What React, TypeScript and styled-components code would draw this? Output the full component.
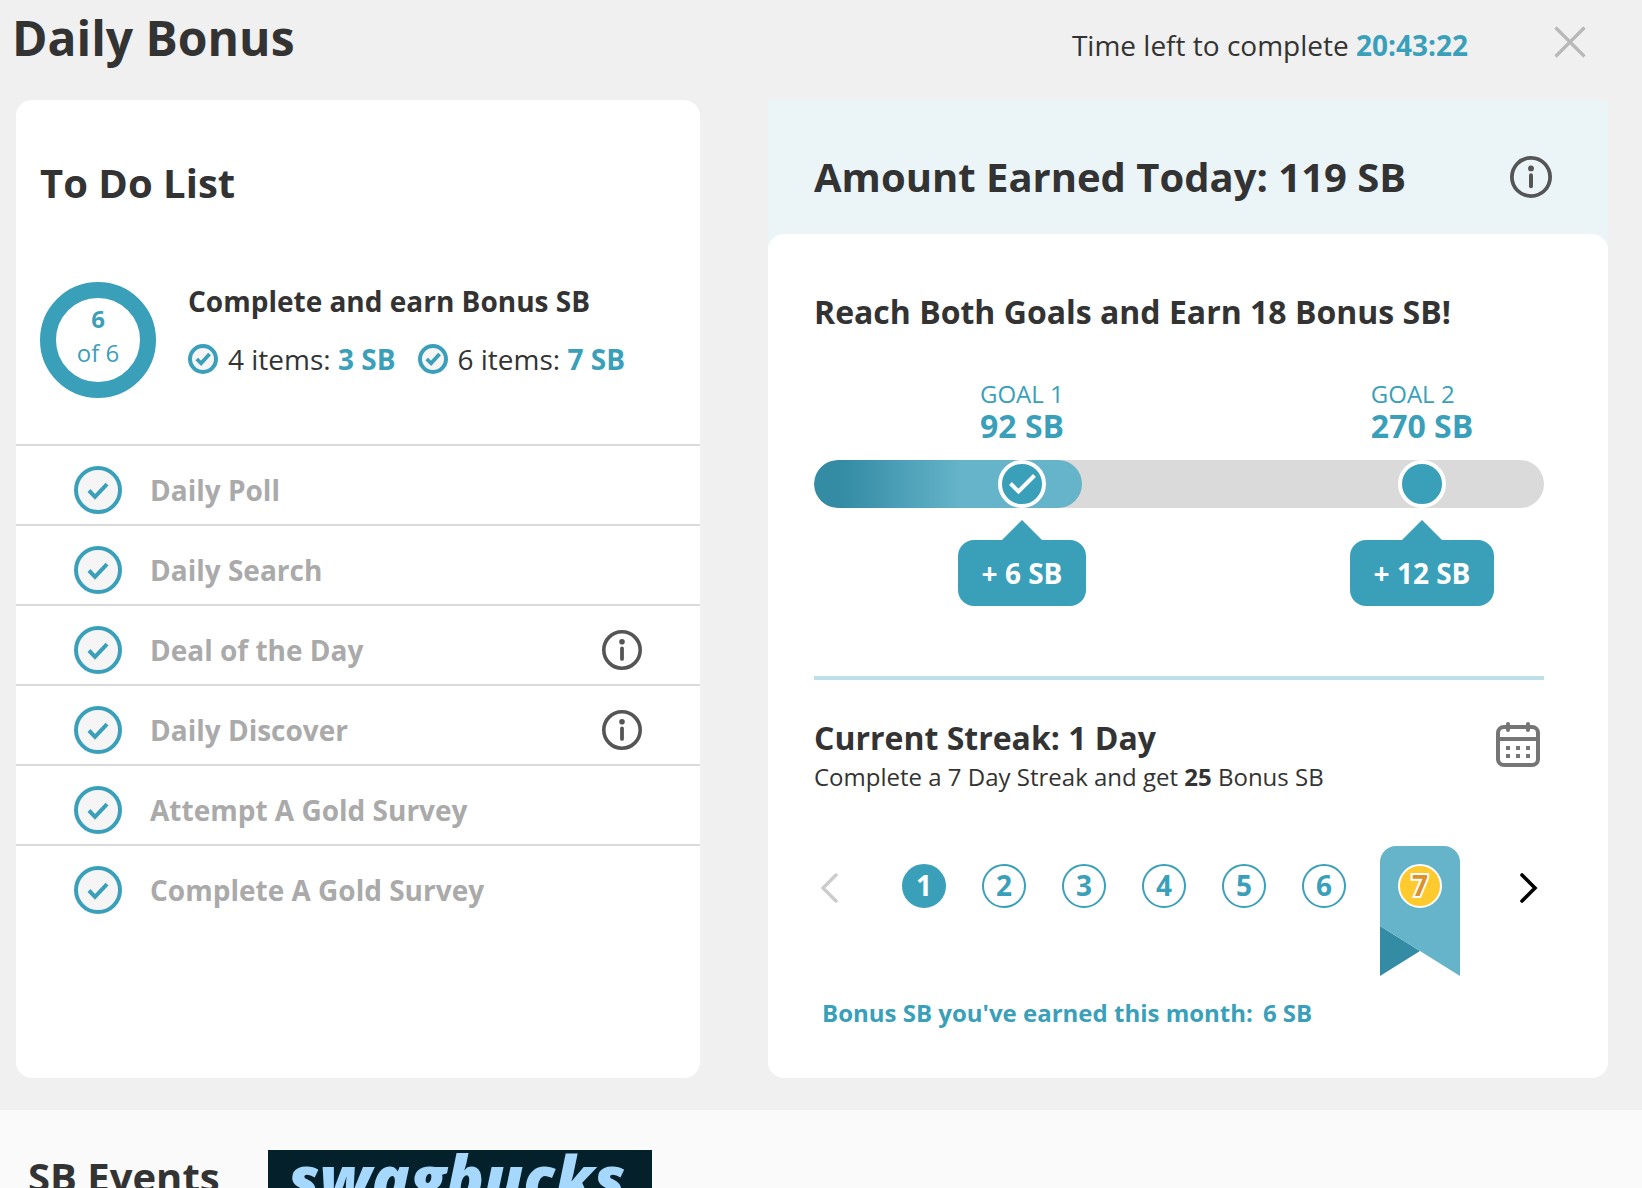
import React from "react";
import styled, { createGlobalStyle } from "styled-components";

const color = {
  text: "#333333",
  teal: "#3aa0ba",
  tealLight: "#65b4c9",
  tealDark: "#338ba4",
  muted: "#aaaaaa",
  line: "#dadada",
};

const GlobalStyle = createGlobalStyle`
  *, *::before, *::after { box-sizing: border-box; }
  body {
    margin: 0;
    background: #fafafa;
    color: ${color.text};
    font-family: "Open Sans", "Noto Sans", sans-serif;
  }
  h1, h2, h3, p, ul, ol { margin: 0; padding: 0; }
  ul, ol { list-style: none; }
  svg { display: block; }
`;

const Page = styled.div`
  display: flex;
  flex-direction: column;
  height: 100vh;
  overflow: hidden;
`;

const BonusSection = styled.section`
  flex: none;
  padding-bottom: 32px;
  background: #f0f0f0;
`;

const Header = styled.header`
  display: flex;
  align-items: baseline;
  padding: 6px 36px 22px 12px;
`;

const Title = styled.h1`
  flex: 1;
  font-size: 48px;
  line-height: 64px;
`;

const TimeLeft = styled.p`
  font-size: 28px;
  line-height: 40px;
`;

const Accent = styled.strong`
  color: ${color.teal};
`;

const IconButton = styled.button<{ $width: number; $height: number }>`
  display: flex;
  flex: none;
  align-items: center;
  justify-content: center;
  width: ${(p) => p.$width}px;
  height: ${(p) => p.$height}px;
  padding: 0;
  border: 0;
  background: none;
  cursor: pointer;

  &:disabled {
    cursor: default;
  }
`;

const CloseButton = styled(IconButton)`
  align-self: flex-start;
  margin-left: 66px;
`;

const Columns = styled.div`
  display: grid;
  grid-template-columns: 684fr 840fr;
  column-gap: 68px;
  padding: 0 34px 0 16px;
`;

const TodoCard = styled.section`
  padding-top: 56px;
  border-radius: 16px;
  background: #ffffff;
`;

const SectionTitle = styled.h2`
  font-size: 40px;
  line-height: 54px;
`;

const TodoTitle = styled(SectionTitle)`
  padding-left: 24px;
`;

const Summary = styled.div`
  display: flex;
  gap: 32px;
  padding: 72px 24px 46px;
`;

const Ring = styled.div`
  display: flex;
  flex: none;
  flex-direction: column;
  align-items: center;
  width: 116px;
  height: 116px;
  padding-top: 4px;
  border: 16px solid ${color.teal};
  border-radius: 50%;
  color: ${color.teal};
  font-size: 24px;
  line-height: 34px;
`;

const SummaryText = styled.div`
  display: flex;
  flex-direction: column;
  gap: 19px;
  font-size: 28px;
  line-height: 40px;
`;

const SummaryHeading = styled.h3`
  font-size: 28px;
  line-height: 38px;
`;

const Tiers = styled.ul`
  display: flex;
  gap: 22px;
`;

const Tier = styled.li`
  display: flex;
  gap: 10px;
  align-items: center;
  white-space: nowrap;
`;

const TodoRow = styled.li`
  display: flex;
  align-items: center;
  gap: 28px;
  height: 80px;
  padding: 10px 58px 0;
  border-top: 2px solid ${color.line};
  color: ${color.muted};
  font-size: 28px;
  font-weight: 700;
  line-height: 40px;
`;

const TodoName = styled.span`
  flex: 1;
`;

const EarnCard = styled.section`
  border-radius: 0 0 16px 16px;
  background: #ebf5f8;
`;

const EarnHeader = styled.div`
  display: flex;
  align-items: center;
  justify-content: space-between;
  height: 134px;
  padding: 20px 56px 0 46px;
`;

const EarnBody = styled.div`
  padding: 56px 64px 48px 46px;
  border-radius: 16px;
  background: #ffffff;
`;

const Subtitle = styled.h3`
  font-size: 32px;
  line-height: 44px;
`;

const GoalGrid = styled.div`
  display: grid;
  grid-template-columns: 416fr 70fr 244fr;
  grid-template-rows: auto 48px auto;
  justify-items: center;
  margin-top: 46px;
`;

const GoalLabel = styled.div<{ $column: number }>`
  grid-row: 1;
  grid-column: ${(p) => p.$column};
  margin-bottom: 16px;
  color: ${color.teal};
`;

const GoalName = styled.p`
  font-size: 24px;
  line-height: 28px;
`;

const GoalAmount = styled.p`
  font-size: 32px;
  font-weight: 700;
  line-height: 36px;
`;

const Track = styled.div`
  grid-row: 2;
  grid-column: 1 / -1;
  justify-self: stretch;
  overflow: hidden;
  border-radius: 24px;
  background: ${color.line};
`;

const TrackFill = styled.div`
  height: 100%;
  border-radius: 24px;
  background: linear-gradient(90deg, ${color.tealDark} 10%, ${color.tealLight} 55%);
`;

const GoalMarker = styled.div<{ $column: number }>`
  z-index: 1;
  grid-row: 2;
  grid-column: ${(p) => p.$column};
  width: 48px;
  height: 48px;
  border: 4px solid #ffffff;
  border-radius: 50%;
  background: ${color.teal};
`;

const Callout = styled.div<{ $column: number }>`
  display: flex;
  flex-direction: column;
  align-items: center;
  grid-row: 3;
  grid-column: ${(p) => p.$column};
  margin-top: 12px;

  &::before {
    content: "";
    border: 20px solid transparent;
    border-top-width: 0;
    border-bottom-color: ${color.teal};
  }
`;

const CalloutText = styled.p`
  padding: 14px 24px;
  border-radius: 16px;
  background: ${color.teal};
  color: #ffffff;
  font-size: 28px;
  font-weight: 700;
  line-height: 38px;
`;

const Divider = styled.hr`
  height: 4px;
  margin: 70px 0 36px;
  border: 0;
  background: #bde0e8;
`;

const StreakHeader = styled.div`
  display: flex;
  align-items: flex-start;
  justify-content: space-between;
`;

const StreakNote = styled.p`
  font-size: 24px;
  line-height: 34px;
`;

const StreakRow = styled.div`
  display: flex;
  align-items: flex-start;
  margin-top: 52px;
`;

const NavButton = styled(IconButton)`
  margin-top: 18px;

  &:last-child {
    margin-left: auto;
  }
`;

const Days = styled.ol`
  display: flex;
  margin-left: 40px;
`;

const Day = styled.li`
  width: 80px;
  padding: 18px 18px 0;
`;

const RibbonDay = styled.li`
  display: grid;
  justify-items: center;
  width: 80px;
  height: 130px;
  margin-left: 16px;

  & > * {
    grid-area: 1 / 1;
  }
`;

const DayBadge = styled.span<{ $filled?: boolean }>`
  display: block;
  width: 44px;
  height: 44px;
  border: 2px solid ${color.teal};
  border-radius: 50%;
  background: ${(p) => (p.$filled ? color.teal : "#ffffff")};
  color: ${(p) => (p.$filled ? "#ffffff" : color.teal)};
  font-size: 28px;
  font-weight: 700;
  line-height: 38px;
  text-align: center;
`;

const PrizeBadge = styled(DayBadge)`
  margin-top: 18px;
  border-color: #ffffff;
  background: #ffca2e;
  color: #dc912d;
  -webkit-text-stroke: 4px #ffffff;
  paint-order: stroke fill;
`;

const MonthTotal = styled.p`
  display: flex;
  gap: 10px;
  margin-top: 20px;
  padding-left: 8px;
  color: ${color.teal};
  font-size: 24px;
  font-weight: 700;
  line-height: 34px;
`;

const Events = styled.section`
  display: flex;
  align-items: flex-start;
  padding: 40px 28px;
`;

const EventsTitle = styled(SectionTitle)`
  flex: none;
  width: 240px;
`;

const Banner = styled.a`
  flex: none;
  width: 384px;
  height: 160px;
  padding: 0 20px;
  background: #03202b;
  color: #a6d8fd;
  font-size: 63px;
  font-style: italic;
  font-weight: 800;
  line-height: 56px;
  text-decoration: none;
`;

function CheckIcon({ size, ring }: { size: number; ring: number }) {
  return (
    <svg width={size} height={size} viewBox="0 0 48 48" fill="none" aria-hidden="true">
      <circle cx="24" cy="24" r={24 - ring / 2} fill="#f5f5f5" stroke={color.teal} strokeWidth={ring} />
      <path
        d={ring > 4 ? "M14 24 21 31 34.5 16" : "M15 24.5 21 30.8 33 18.2"}
        stroke={color.teal}
        strokeWidth={ring > 4 ? 6 : 4}
      />
    </svg>
  );
}

function InfoIcon({ size }: { size: number }) {
  return (
    <svg width={size} height={size} viewBox="0 0 40 40" fill="none" aria-hidden="true">
      <circle cx="20" cy="20" r="18.2" stroke="#555555" strokeWidth="3.6" />
      <circle cx="20" cy="11.8" r="2.8" fill="#555555" />
      <path d="M20 18.3v10.6" stroke="#555555" strokeWidth="3.8" strokeLinecap="round" />
    </svg>
  );
}

function CalendarIcon() {
  return (
    <svg width="44" height="45" viewBox="0 0 44 45" fill="none" stroke="#757575" aria-hidden="true">
      <rect x="2" y="5" width="40" height="38" rx="6" strokeWidth="4" />
      <path d="M2 17h40" strokeWidth="4" />
      <path d="M12 2v6M32 2v6" strokeWidth="4" strokeLinecap="round" />
      <path d="M10 26h4m6 0h4m6 0h4M10 34h4m6 0h4m6 0h4" strokeWidth="4" />
    </svg>
  );
}

const todos = [
  { name: "Daily Poll" },
  { name: "Daily Search" },
  { name: "Deal of the Day", info: true },
  { name: "Daily Discover", info: true },
  { name: "Attempt A Gold Survey" },
  { name: "Complete A Gold Survey" },
];

const tiers = [
  { label: "4 items:", reward: "3 SB" },
  { label: "6 items:", reward: "7 SB" },
];

const goals = [
  { name: "GOAL 1", amount: "92 SB", bonus: "+ 6 SB", column: 1, reached: true },
  { name: "GOAL 2", amount: "270 SB", bonus: "+ 12 SB", column: 3, reached: false },
];

const earned = 119;
const trackMax = 324;

export default function App() {
  return (
    <Page>
      <GlobalStyle />
      <BonusSection>
        <Header>
          <Title>Daily Bonus</Title>
          <TimeLeft>
            Time left to complete <Accent>20:43:22</Accent>
          </TimeLeft>
          <CloseButton type="button" $width={72} $height={72} aria-label="Close">
            <svg width="32" height="32" viewBox="0 0 32 32" stroke="#b8b8b8" strokeWidth="3.2">
              <path d="M1.5 1.5l29 29M30.5 1.5l-29 29" />
            </svg>
          </CloseButton>
        </Header>

        <Columns>
          <TodoCard>
            <TodoTitle>To Do List</TodoTitle>
            <Summary>
              <Ring>
                <strong>6</strong>
                <span>of 6</span>
              </Ring>
              <SummaryText>
                <SummaryHeading>Complete and earn Bonus SB</SummaryHeading>
                <Tiers>
                  {tiers.map((tier) => (
                    <Tier key={tier.label}>
                      <CheckIcon size={30} ring={6.4} />
                      <span>
                        {tier.label} <Accent>{tier.reward}</Accent>
                      </span>
                    </Tier>
                  ))}
                </Tiers>
              </SummaryText>
            </Summary>
            <ul>
              {todos.map((todo) => (
                <TodoRow key={todo.name}>
                  <CheckIcon size={48} ring={4} />
                  <TodoName>{todo.name}</TodoName>
                  {todo.info && (
                    <IconButton type="button" $width={40} $height={40} aria-label={`About ${todo.name}`}>
                      <InfoIcon size={40} />
                    </IconButton>
                  )}
                </TodoRow>
              ))}
            </ul>
          </TodoCard>

          <EarnCard>
            <EarnHeader>
              <SectionTitle>Amount Earned Today: {earned} SB</SectionTitle>
              <IconButton type="button" $width={42} $height={42} aria-label="About earnings">
                <InfoIcon size={42} />
              </IconButton>
            </EarnHeader>
            <EarnBody>
              <Subtitle>Reach Both Goals and Earn 18 Bonus SB!</Subtitle>
              <GoalGrid>
                <Track>
                  <TrackFill style={{ width: `${(earned / trackMax) * 100}%` }} />
                </Track>
                {goals.map((goal) => (
                  <React.Fragment key={goal.name}>
                    <GoalLabel $column={goal.column}>
                      <GoalName>{goal.name}</GoalName>
                      <GoalAmount>{goal.amount}</GoalAmount>
                    </GoalLabel>
                    <GoalMarker $column={goal.column}>
                      {goal.reached && (
                        <svg width="40" height="40" viewBox="0 0 40 40" fill="none" aria-hidden="true">
                          <path d="M8.5 19.5 16.5 27.5 32.5 11.5" stroke="#ffffff" strokeWidth="4" />
                        </svg>
                      )}
                    </GoalMarker>
                    <Callout $column={goal.column}>
                      <CalloutText>{goal.bonus}</CalloutText>
                    </Callout>
                  </React.Fragment>
                ))}
              </GoalGrid>

              <Divider />

              <StreakHeader>
                <div>
                  <Subtitle>Current Streak: 1 Day</Subtitle>
                  <StreakNote>
                    Complete a 7 Day Streak and get <strong>25</strong> Bonus SB
                  </StreakNote>
                </div>
                <IconButton type="button" $width={52} $height={56} aria-label="Streak calendar">
                  <CalendarIcon />
                </IconButton>
              </StreakHeader>

              <StreakRow>
                <NavButton type="button" $width={30} $height={48} aria-label="Previous days" disabled>
                  <svg width="18" height="30" viewBox="0 0 18 30" fill="none">
                    <path d="M16 2 3 15 16 28" stroke="#cccccc" strokeWidth="3.4" strokeLinecap="round" />
                  </svg>
                </NavButton>
                <Days>
                  {[1, 2, 3, 4, 5, 6].map((day) => (
                    <Day key={day}>
                      <DayBadge $filled={day === 1}>{day}</DayBadge>
                    </Day>
                  ))}
                  <RibbonDay>
                    <svg width="80" height="130" viewBox="0 0 80 130" aria-hidden="true">
                      <path d="M0 80 40 105 0 130Z" fill={color.tealDark} />
                      <path d="M0 16A16 16 0 0 1 16 0H64A16 16 0 0 1 80 16V130L0 80Z" fill={color.tealLight} />
                    </svg>
                    <PrizeBadge>7</PrizeBadge>
                  </RibbonDay>
                </Days>
                <NavButton type="button" $width={30} $height={48} aria-label="Next days">
                  <svg width="18" height="30" viewBox="0 0 18 30" fill="none">
                    <path d="M2 2 15 15 2 28" stroke="#000000" strokeWidth="3.6" strokeLinecap="round" />
                  </svg>
                </NavButton>
              </StreakRow>

              <MonthTotal>
                <span>Bonus SB you've earned this month:</span>
                <span>6 SB</span>
              </MonthTotal>
            </EarnBody>
          </EarnCard>
        </Columns>
      </BonusSection>

      <Events>
        <EventsTitle>SB Events</EventsTitle>
        <Banner href="#events">swagbucks</Banner>
      </Events>
    </Page>
  );
}
